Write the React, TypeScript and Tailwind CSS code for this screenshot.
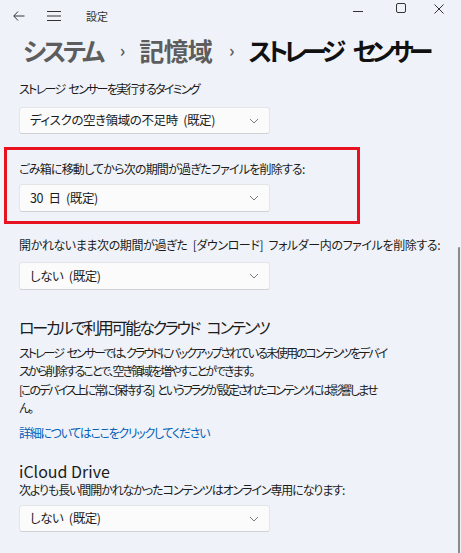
import React from "react";

const jp = "[font-family:'Noto_Sans_CJK_JP','Noto_Sans',sans-serif] [font-feature-settings:'palt'] [word-spacing:3px]";

function Chevron() {
  return (
    <svg width="10" height="6" viewBox="0 0 10 6" className="shrink-0">
      <path d="M1 1 L5 5 L9 1" fill="none" stroke="#7a7a7a" strokeWidth="1" />
    </svg>
  );
}

function Dropdown({ label, h = "h-[27px]" }: { label: string; h?: string }) {
  return (
    <div
      className={`w-[251px] ${h} flex items-center justify-between pl-[10px] pr-[10px] bg-[#fbfbfc] border border-[#e3e5e8] border-b-[#cfd1d4] rounded-[3px] text-[12.5px] tracking-[-0.4px] text-[#1b1b1b]`}
    >
      <span>{label}</span>
      <Chevron />
    </div>
  );
}

export default function App() {
  return (
    <div className={`relative w-[461px] h-[553px] overflow-hidden bg-[#eff3f9] text-[#1b1b1b] ${jp}`}>
      {/* title bar */}
      <div className="h-[32px] flex items-center relative">
        <svg width="12" height="10" viewBox="0 0 12 10" className="ml-[13px]">
          <path d="M5 0.5 L0.8 5 L5 9.5 M0.8 5 H11.5" fill="none" stroke="#333" strokeWidth="1" />
        </svg>
        <svg width="14" height="10" viewBox="0 0 14 10" className="ml-[22px]">
          <path d="M0 0.5 H14 M0 5 H14 M0 9.5 H14" fill="none" stroke="#333" strokeWidth="1" />
        </svg>
        <span className="ml-[25px] text-[11px] text-[#333]">設定</span>
        <div className="absolute right-0 top-0 flex">
          <div className="w-[46px] h-[22px] flex items-center justify-center">
            <svg width="10" height="1" viewBox="0 0 10 1"><path d="M0 0.5 H10" stroke="#333" strokeWidth="1" /></svg>
          </div>
          <div className="w-[40px] h-[16px] flex items-center justify-center">
            <svg width="10" height="10" viewBox="0 0 10 10"><rect x="0.5" y="0.5" width="9" height="9" rx="1.5" fill="none" stroke="#333" strokeWidth="1" /></svg>
          </div>
          <div className="w-[40px] h-[18px] flex items-center justify-center pr-[4px]">
            <svg width="10" height="10" viewBox="0 0 10 10"><path d="M0.5 0.5 L9.5 9.5 M9.5 0.5 L0.5 9.5" stroke="#333" strokeWidth="1" /></svg>
          </div>
        </div>
      </div>

      {/* breadcrumb */}
      <div className="h-[36px] flex items-center pl-[23px] text-[25px] leading-[36px] font-semibold whitespace-nowrap">
        <span className="text-[#5d5d5d] tracking-[-3.3px]">システム</span>
        <span className="text-[#5d5d5d] text-[17px] ml-[18px] mr-[14px]">›</span>
        <span className="text-[#5d5d5d] tracking-[-0.8px]">記憶域</span>
        <span className="text-[#5d5d5d] text-[17px] ml-[17px] mr-[14px]">›</span>
        <span className="text-[#111] font-bold tracking-[-4.6px] [word-spacing:10px]">ストレージ センサー</span>
      </div>

      <div className="pl-[19px] text-[12px] tracking-[-0.8px]">
        <div className="mt-[12px] leading-[18px] tracking-[-1.7px]">ストレージ センサーを実行するタイミング</div>
        <div className="mt-[9px]">
          <Dropdown label="ディスクの空き領域の不足時 (既定)" />
        </div>
      </div>

      {/* red box */}
      <div className="mt-[13px] ml-[4px] w-[356px] h-[77px] border-[3px] border-[#e8111f] pl-[12px] pt-[10px] text-[12px] tracking-[-0.8px]">
        <div className="leading-[18px] whitespace-nowrap">ごみ箱に移動してから次の期間が過ぎたファイルを削除する:</div>
        <div className="mt-[6px]">
          <Dropdown label="30 日 (既定)" h="h-[28px]" />
        </div>
      </div>

      <div className="pl-[19px] text-[12px] tracking-[-0.8px]">
        <div className="mt-[12px] leading-[18px] whitespace-nowrap tracking-[-0.4px]">開かれないまま次の期間が過ぎた [ダウンロード] フォルダー内のファイルを削除する:</div>
        <div className="mt-[8px]">
          <Dropdown label="しない (既定)" h="h-[28px]" />
        </div>

        <div className="mt-[25px] text-[16px] leading-[24px] tracking-[-2.2px] [word-spacing:6px]">ローカルで利用可能なクラウド コンテンツ</div>
        <div className="mt-[5px] leading-[18px] whitespace-nowrap tracking-[-2px]">
          <div>ストレージ センサーでは、クラウドにバックアップされている未使用のコンテンツをデバイ</div>
          <div>スから削除することで、空き領域を増やすことができます。</div>
        </div>
        <div className="mt-[1px] leading-[18px] whitespace-nowrap tracking-[-2px]">
          <div>[このデバイス上に常に保持する] というフラグが設定されたコンテンツには影響しませ</div>
          <div>ん。</div>
        </div>
        <div className="mt-[7px] leading-[18px] text-[#0060b8] tracking-[-1.3px]">詳細についてはここをクリックしてください</div>

        <div className="mt-[19px] text-[16px] leading-[20px] tracking-normal [word-spacing:0px]">iCloud Drive</div>
        <div className="leading-[18px] tracking-[-1.1px]">次よりも長い間開かれなかったコンテンツはオンライン専用になります:</div>
        <div className="mt-[6px]">
          <Dropdown label="しない (既定)" />
        </div>
      </div>

      {/* scrollbar */}
      <div className="absolute right-[1px] top-[247px] w-[2px] h-[310px] bg-[#8a8a8a] rounded-full" />
    </div>
  );
}
